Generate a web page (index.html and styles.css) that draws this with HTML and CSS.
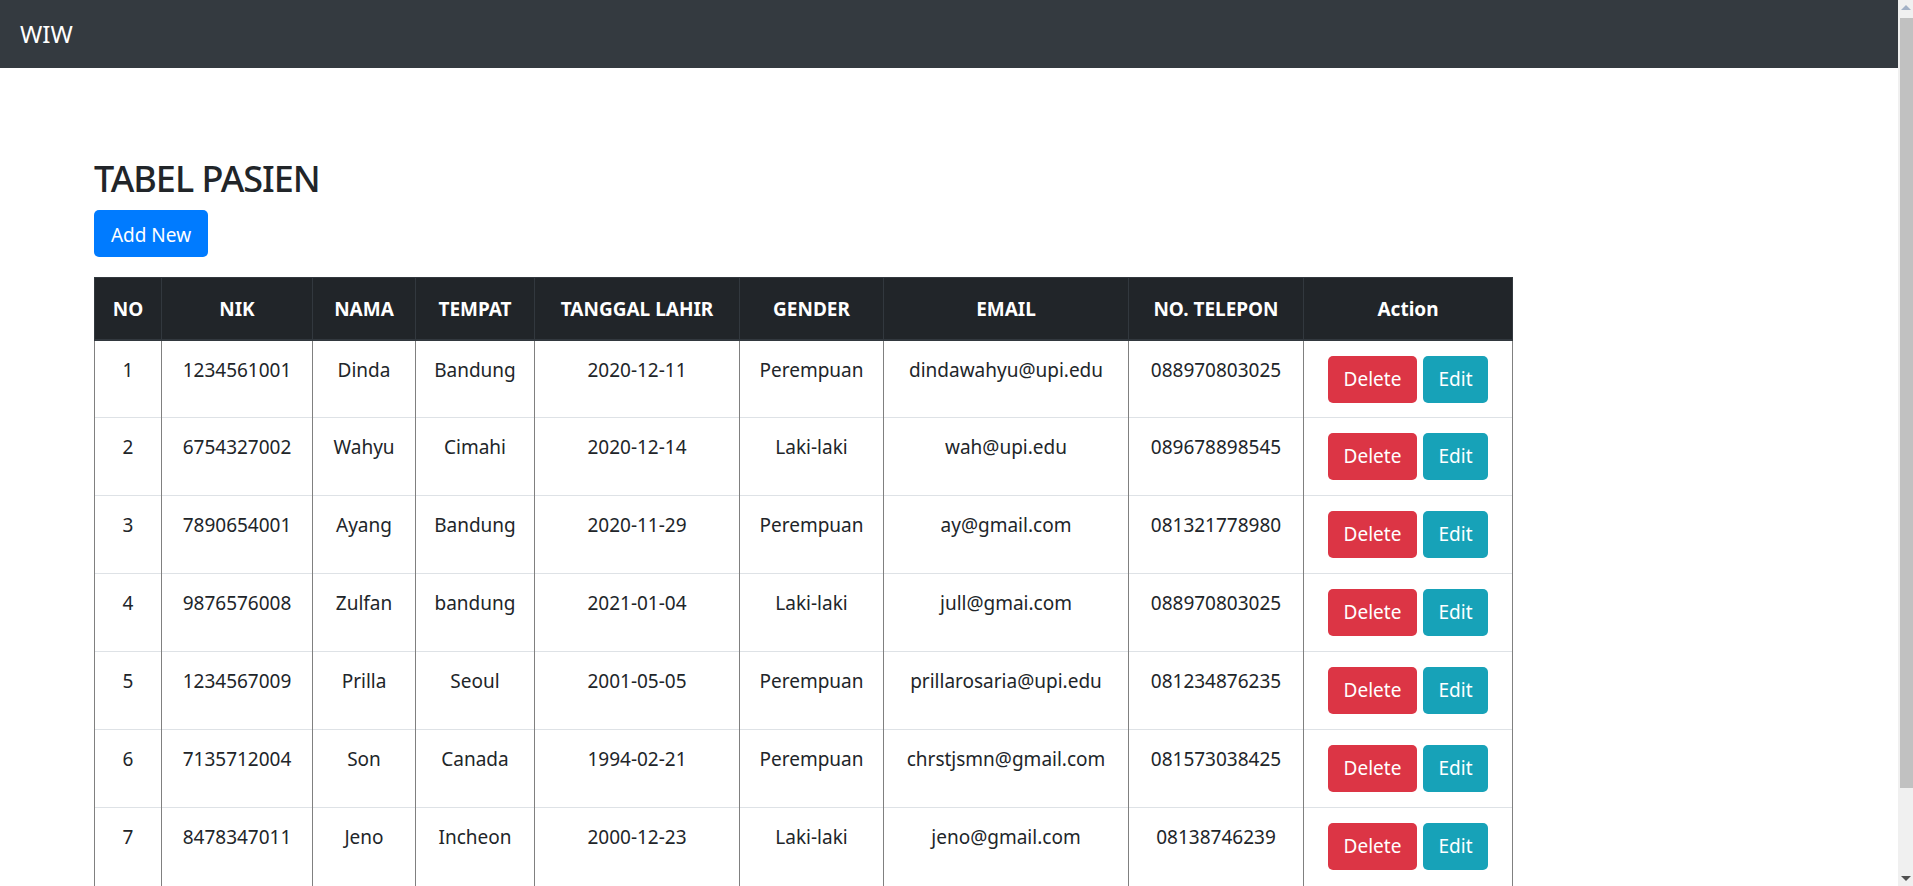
FILE: index.html
```html
<!DOCTYPE html>
<html lang="id">
<head>
<meta charset="utf-8">
<title>WIW</title>
<link rel="stylesheet" href="styles.css">
</head>
<body>
<nav class="navbar"><a class="brand" href="#">WIW</a></nav>
<main class="content">
  <h2 class="title">TABEL PASIEN</h2>
  <a class="btn btn-primary btn-add" href="#">Add New</a>
  <table class="table">
    <colgroup>
      <col class="c-no"><col class="c-nik"><col class="c-nama"><col class="c-tempat"><col class="c-tgl"><col class="c-gender"><col class="c-email"><col class="c-tel"><col class="c-act">
    </colgroup>
    <thead>
      <tr><th>NO</th><th>NIK</th><th>NAMA</th><th>TEMPAT</th><th>TANGGAL LAHIR</th><th>GENDER</th><th>EMAIL</th><th>NO. TELEPON</th><th>Action</th></tr>
    </thead>
    <tbody>
      <tr><td>1</td><td>1234561001</td><td>Dinda</td><td>Bandung</td><td>2020-12-11</td><td>Perempuan</td><td>dindawahyu@upi.edu</td><td>088970803025</td><td><div class="actions"><a class="btn btn-danger" href="#">Delete</a><a class="btn btn-info" href="#">Edit</a></div></td></tr>
      <tr><td>2</td><td>6754327002</td><td>Wahyu</td><td>Cimahi</td><td>2020-12-14</td><td>Laki-laki</td><td>wah@upi.edu</td><td>089678898545</td><td><div class="actions"><a class="btn btn-danger" href="#">Delete</a><a class="btn btn-info" href="#">Edit</a></div></td></tr>
      <tr><td>3</td><td>7890654001</td><td>Ayang</td><td>Bandung</td><td>2020-11-29</td><td>Perempuan</td><td>ay@gmail.com</td><td>081321778980</td><td><div class="actions"><a class="btn btn-danger" href="#">Delete</a><a class="btn btn-info" href="#">Edit</a></div></td></tr>
      <tr><td>4</td><td>9876576008</td><td>Zulfan</td><td>bandung</td><td>2021-01-04</td><td>Laki-laki</td><td>jull@gmai.com</td><td>088970803025</td><td><div class="actions"><a class="btn btn-danger" href="#">Delete</a><a class="btn btn-info" href="#">Edit</a></div></td></tr>
      <tr><td>5</td><td>1234567009</td><td>Prilla</td><td>Seoul</td><td>2001-05-05</td><td>Perempuan</td><td>prillarosaria@upi.edu</td><td>081234876235</td><td><div class="actions"><a class="btn btn-danger" href="#">Delete</a><a class="btn btn-info" href="#">Edit</a></div></td></tr>
      <tr><td>6</td><td>7135712004</td><td>Son</td><td>Canada</td><td>1994-02-21</td><td>Perempuan</td><td>chrstjsmn@gmail.com</td><td>081573038425</td><td><div class="actions"><a class="btn btn-danger" href="#">Delete</a><a class="btn btn-info" href="#">Edit</a></div></td></tr>
      <tr><td>7</td><td>8478347011</td><td>Jeno</td><td>Incheon</td><td>2000-12-23</td><td>Laki-laki</td><td>jeno@gmail.com</td><td>08138746239</td><td><div class="actions"><a class="btn btn-danger" href="#">Delete</a><a class="btn btn-info" href="#">Edit</a></div></td></tr>
    </tbody>
  </table>
</main>
<div class="scrollbar">
  <div class="sb-up"></div>
  <div class="sb-thumb"></div>
  <div class="sb-down"></div>
</div>
</body>
</html>
```

FILE: styles.css
```css
html, body {
  margin: 0;
  padding: 0;
  overflow: hidden;
  height: 100%;
}
body {
  font-family: "Noto Sans", "Open Sans", sans-serif;
  font-size: 19px;
  line-height: 29px;
  color: #212529;
  background: #fff;
}
.navbar {
  height: 68px;
  background: #343a40;
  display: flex;
  align-items: center;
  padding: 0 20px;
}
.brand {
  color: #fff;
  text-decoration: none;
  font-size: 24px;
  line-height: 30px;
}
.content {
  padding: 88px 0 0 94px;
}
.title {
  margin: 0;
  font-size: 36px;
  line-height: 46px;
  font-weight: 500;
  letter-spacing: -1px;
}
.btn {
  display: inline-flex;
  align-items: center;
  justify-content: center;
  height: 47px;
  box-sizing: border-box;
  border-radius: 5px;
  color: #fff;
  text-decoration: none;
  font-size: 19px;
}
.btn-primary { background: #007bff; }
.btn-danger { background: #dc3545; width: 89px; }
.btn-info { background: #17a2b8; width: 65px; }
.btn-add {
  width: 114px;
  margin-top: 8px;
  padding-top: 3px;
}
.table {
  margin-top: 20px;
  width: 1418px;
  table-layout: fixed;
  border-collapse: collapse;
  text-align: center;
}
.c-no { width: 67px; }
.c-nik { width: 151px; }
.c-nama { width: 103px; }
.c-tempat { width: 119px; }
.c-tgl { width: 205px; }
.c-gender { width: 144px; }
.c-email { width: 245px; }
.c-tel { width: 175px; }
.c-act { width: 209px; }
.table th {
  background: #212529;
  color: #fff;
  font-weight: 700;
  height: 62px;
  box-sizing: border-box;
  padding: 2px 4px 0;
  border: 1px solid #32383e;
  border-bottom: 2px solid #32383e;
  white-space: nowrap;
}
.table td {
  height: 78px;
  box-sizing: border-box;
  padding: 15px 4px 0;
  vertical-align: top;
  border-top: 1px solid #dee2e6;
  border-left: 1px solid #808080;
  border-right: 1px solid #808080;
  white-space: nowrap;
}
.actions {
  display: flex;
  justify-content: center;
  gap: 6px;
}
.scrollbar {
  position: fixed;
  top: 0;
  right: 0;
  width: 15px;
  height: 100%;
  background: #f0f0f0;
}
.sb-up {
  position: absolute;
  top: 5px;
  left: 3px;
  width: 0;
  height: 0;
  border-left: 5px solid transparent;
  border-right: 5px solid transparent;
  border-bottom: 5px solid #a3b1c6;
}
.sb-thumb {
  position: absolute;
  top: 18px;
  left: 2px;
  width: 13px;
  height: 770px;
  background: #c1c1c1;
}
.sb-down {
  position: absolute;
  bottom: 5px;
  left: 3px;
  width: 0;
  height: 0;
  border-left: 5px solid transparent;
  border-right: 5px solid transparent;
  border-top: 5px solid #505050;
}
```
